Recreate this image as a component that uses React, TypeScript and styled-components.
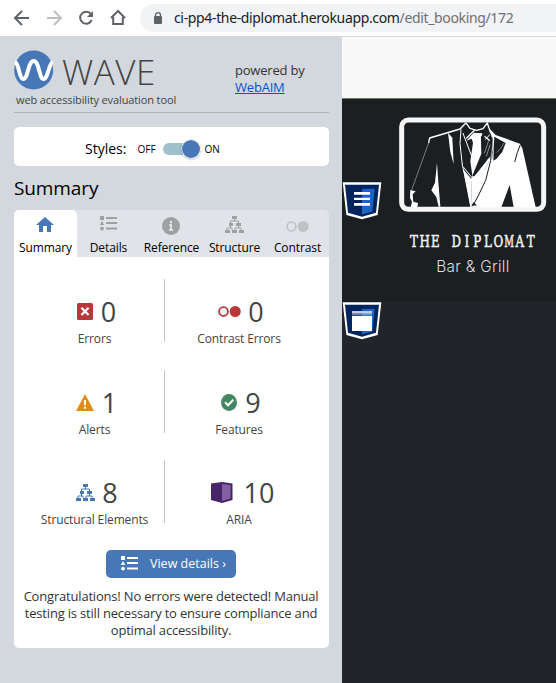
import React from 'react';
import styled, { createGlobalStyle } from 'styled-components';

const Global = createGlobalStyle`
  * { box-sizing: border-box; }
  body { margin: 0; overflow: hidden; font-family: "Open Sans", "Noto Sans", sans-serif; color: #000; }
  svg { display: block; flex: none; }
`;
const Window = styled.div`width: 556px; height: 683px; display: flex; flex-direction: column; overflow: hidden;`;
const Toolbar = styled.header`height: 36px; flex: none; display: flex; align-items: flex-start; background: #fff;`;
const NavIcons = styled.div`width: 140px; flex: none;`;
const AddressBar = styled.div`
  flex: 1; height: 28px; margin-top: 4px; padding-left: 13px; display: flex; align-items: center;
  background: #f1f3f4; border-radius: 14px 0 0 14px; color: #202124;
  font-size: 14px; line-height: 28px; white-space: nowrap;
`;
const Url = styled.span`margin-left: 11px; letter-spacing: -0.35px; font-family: "Noto Sans", sans-serif;`;
const Path = styled.span`color: #6d7175;`;
const Body = styled.div`flex: 1; display: flex; min-height: 0;`;
const Sidebar = styled.aside`width: 342px; flex: none; padding: 14px 13px 0 14px; background: #d3d8df;`;
const Brand = styled.div`height: 63px; display: flex; border-bottom: 1px solid #b0b5b8;`;
const BrandMain = styled.div`width: 221px;`;
const BrandRow = styled.div`display: flex; height: 43px;`;
const BrandName = styled.div`
  margin: -1px 0 0 8px; color: #444; font-size: 35px; font-weight: 300; line-height: 46px; letter-spacing: 0.5px;
`;
const Tagline = styled.div`margin: 0 0 0 2px; color: #444; font-size: 11px; line-height: 14px; letter-spacing: -0.12px; white-space: nowrap;`;
const Powered = styled.div`padding-top: 12px; color: #333; font-size: 13px; line-height: 17px; letter-spacing: -0.2px; white-space: nowrap;`;
const Link = styled.a`color: #0b50d0; text-decoration: underline;`;
const Styles = styled.div`
  height: 39px; margin-top: 14px; padding: 5px 0 0 71px; display: flex; background: #fff; border-radius: 5px;
  font-size: 14px; line-height: 34px;
`;
const Small = styled.span<{ $left: number }>`margin-left: ${p => p.$left}px; font-size: 10px; line-height: 35px;`;
const Track = styled.div`
  width: 37px; height: 12px; margin: 11px 0 0 7px; display: flex; align-items: center; justify-content: flex-end;
  background: #9fc1cb; border-radius: 6px;
`;
const Knob = styled.div`
  width: 18px; height: 18px; flex: none; border-radius: 50%; background: #4777b7;
  box-shadow: 0 0 0 .6px #fff, 0 1px 2px 1px #0003;
`;
const Title = styled.h2`margin: 0; height: 44px; font-size: 19px; font-weight: 400; line-height: 44px; letter-spacing: -0.1px;`;
const Tabs = styled.nav`height: 47px; display: flex; background: #e0e3e7; border-radius: 5px 5px 0 0;`;
const Tab = styled.div<{ $active?: boolean }>`
  width: 63px; display: flex; flex-direction: column; align-items: center; white-space: nowrap;
  font-size: 12px; line-height: 18px; letter-spacing: -0.1px; border-radius: 5px 5px 0 0; background: ${p => p.$active ? '#fff' : 'transparent'};
`;
const TabIcon = styled.div`height: 29px; display: flex; align-items: flex-start; padding: 6px 1px 0 0;`;
const Panel = styled.main`height: 391px; background: #fff; border-radius: 0 0 5px 5px; padding-top: 22px;`;
const StatRow = styled.div`height: 90.5px; display: grid; grid-template-columns: 151px 164px;`;
const Stat = styled.div<{ $divided?: boolean }>`
  height: 63px; color: #444; text-align: center;
  padding: ${p => p.$divided ? '15px 0 0 11px' : '15px 16px 0 0'};
  border-right: ${p => p.$divided ? '1px solid #c6c6c6' : '0'};
`;
const Count = styled.div<{ $gap: number; $indent: number }>`
  height: 36px; padding: 0 0 1px ${p => p.$indent}px; display: flex; align-items: center; justify-content: center;
  gap: ${p => p.$gap}px; font-size: 27px; line-height: 35px;
`;
const StatLabel = styled.div`font-size: 12px; line-height: 18px; letter-spacing: -0.13px; white-space: nowrap;`;
const Details = styled.button`
  width: 130px; height: 28px; margin: -1px 0 0 92px; padding: 0 0 0 15px; border: 0; border-radius: 5px;
  display: flex; align-items: center; gap: 12px; background: #4777b7; color: #fff; font: 12.5px "Open Sans", sans-serif; white-space: nowrap;
`;
const Message = styled.p`margin: 10px 0 0; padding-right: 1px; color: #333; text-align: center; font-size: 13px; line-height: 17px; letter-spacing: -0.19px; white-space: nowrap;`;
const Site = styled.section`
  position: relative; flex: 1; display: flex; flex-direction: column; background: #212529; border-top: 1px solid #d4d6d8;
`;
const Blank = styled.div`height: 61px; background: #f9f9f9;`;
const Hero = styled.div`height: 204px; background: #1b1f21; border-top: 1px solid #69806b; padding: 11px 0 0 53px;`;
const Marker = styled.div<{ $top: number }>`position: absolute; left: 0; top: ${p => p.$top}px;`;

const ListIcon = ({ color }: { color: string }) => (
  <svg width="17" height="15" viewBox="0 0 17 15" fill={color}>
    <path d="M0 0h4v4H0zM2 5l2.3 4H-.3zM6 1h11v2H6zM6 6h11v2H6zM6 11.5h11v2H6z" /><circle cx="2" cy="12.6" r="1.9" />
  </svg>
);
const TreeIcon = ({ color }: { color: string }) => (
  <svg width="19" height="17" viewBox="0 0 19 17" fill={color}>
    <path d="M7 0h5v3H7zM4 7h4v3H4zM11 7h5v3h-5zM0 14h5v3H0zM7 14h5v3H7zM14 14h5v3h-5z" />
    <path d="M9.5 3v2.5M5.5 7V5h8v2M5.5 10v2M13.5 10v2M2 14v-2h5v2M10 14v-2h6v2" fill="none" stroke={color} />
  </svg>
);
const Circles = ({ color, large }: { color: string; large?: boolean }) => (
  <svg width="23" height={large ? 15 : 21} viewBox={large ? '0 0 23 15' : '0 -3 23 21'} fill={color}>
    <circle cx="5.5" cy="7.5" r="4.4" fill="none" stroke={color} strokeWidth={large ? 1.8 : 1.5} /><circle cx="17.2" cy="7.5" r="5.5" />
  </svg>
);
const ErrorIcon = () => <svg width="16" height="17" viewBox="0 0 16 17"><rect width="16" height="17" rx="1.5" fill="#b93639" /><path d="m4.4 4.8 7.2 7.2m0-7.2L4.4 12" stroke="#fff" strokeWidth="2.3" /></svg>;
const AlertIcon = () => <svg width="18" height="17" viewBox="0 0 18 17"><path d="m9 0 9 17H0z" fill="#e18b1a" /><path d="M9 6v5m0 1.5v2.2" stroke="#fff" strokeWidth="2" /></svg>;
const CheckIcon = () => <svg width="16" height="17" viewBox="0 0 16 17"><ellipse cx="8" cy="8.5" rx="8" ry="8.4" fill="#468763" /><path d="m4 8.3 3 3 5.4-5.6" fill="none" stroke="#fff" strokeWidth="2" /></svg>;
const AriaIcon = () => <svg width="22" height="21" viewBox="0 0 22 21"><path d="M0 1.5 11 0l10.5 1.5V18L11 21 0 18z" fill="#482469" /><path d="m11 2 8.5 1v13.6L11 19z" fill="#8360a1" /></svg>;

const Shield = ({ page }: { page?: boolean }) => (
  <svg width="40" height="38" viewBox="0 0 120 114">
    <path d="M2 1h116l-11 98-47 13-47-13z" fill="#fff" /><path d="M9 8h102l-9 84-42 12-42-12z" fill="#00245b" />
    <path d="M60 20h38l-7 69-31 8z" fill="#1c63c8" />
    {page
      ? <><path d="M30 42h60v45H30z" fill="#fff" /><path d="M30 27h60v8H30z" fill="#bdcce2" /><path d="M30 37h60v3H30z" fill="#8fa8d0" /></>
      : <path d="M36 30h48v8H36zM36 47h48v7H36zM36 63h48v8H36z" fill="#fff" />}
  </svg>
);

const Diplomat = () => (
  <svg width="160" height="175" viewBox="0 0 480 525">
    <rect x="20" y="30" width="426" height="268" rx="20" fill="#1b1f21" stroke="#f5f5f5" strokeWidth="15" />
    <g fill="#fff">
      <path d="m282 54 20 21 73 26 7 14 40 177h-66l-12-67-25 67h-87l-4-86 40-51 25-65z" />
      <path d="m159 68 13 15 4 80-10-37zM126 158l3 45 7 87h-5l-7-29-15-20 11-23z" />
      <path d="m46 240 16 4-9 9 2 22 14 4-2 13H47l4-17-6-12z" />
      <path d="m236 68 26 2-4 18 4 43-14 44-15 28-7-49 8-56-4-12-16 6z" />
      <path d="m204 176 25 31 2 83h-5l-12-60z" />
    </g>
    <g fill="#1b1f21">
      <path d="m258 78 12 7 21 7-4 46-49 61-6-2 27-66z" />
      <path d="m298 80 34 19-10 26-18 22-9 5z" />
    </g>
    <g fill="none" stroke="#fff" strokeLinecap="round" strokeLinejoin="round">
      <path d="m212 40-17 17-91 27-3 14" strokeWidth="4" />
      <path d="M101 98 50 240" stroke="#aaa" strokeWidth="2" />
      <path d="m198 59-3 42 7 64 15 65 11 60M204 70l31 82M206 172l25 31" strokeWidth="3" />
      <path d="m214 40 11 15 20 6 19-5 13-17 9 28M239 60l-24 24M270 80l13 11" strokeWidth="4" />
      <path d="m272 88 12-14m-10 100 14-18m-22 22 14-31" strokeWidth="3" />
    </g>
    <g fill="none" stroke="#1b1f21" strokeWidth="3">
      <path d="m290 90-3 62-15 59-24 50-15 27M376 104q-10 23-17 52" />
      <path d="m281 92-13 38m17-26-11 35m-5 41 14-27" stroke="#c0c3c4" strokeWidth="2" />
      <path d="M292 82q5 35-2 65m37-48q-7 16-22 29" stroke="#7b7f82" />
    </g>
    <path d="m229 287 17-1-10-9z" fill="#1b1f21" />
    <g fill="#f4f4f4" stroke="#f4f4f4" strokeWidth="1.6" fontFamily="DejaVu Serif" fontSize="51" textAnchor="middle">
      <text y="411" transform="scale(.7 1)" x="81 127 173">THE</text>
      <text y="411" transform="scale(.7 1)" x="263 308 353 398 443">DIPLO</text>
      <text y="411" transform="scale(.56 1)" x="611">M</text>
      <text y="411" transform="scale(.7 1)" x="535 582">AT</text>
    </g>
    <text x="124" y="486" fontSize="46" fontFamily="Inter" fontWeight="300" fill="#ddd" textLength="219">Bar &amp; Grill</text>
  </svg>
);

const stats = [
  [{ icon: <ErrorIcon />, n: 0, label: 'Errors', gap: 8, indent: 4 }, { icon: <Circles color="#b93639" large />, n: 0, label: 'Contrast Errors', gap: 7, indent: 4 }],
  [{ icon: <AlertIcon />, n: 1, label: 'Alerts', gap: 8, indent: 4 }, { icon: <CheckIcon />, n: 9, label: 'Features', gap: 8, indent: 4 }],
  [{ icon: <TreeIcon color="#4777b7" />, n: 8, label: 'Structural Elements', gap: 7, indent: 5 }, { icon: <AriaIcon />, n: 10, label: 'ARIA', gap: 11, indent: 7 }],
];

export default function App() {
  return (
    <Window>
      <Global />
      <Toolbar>
        <NavIcons>
          <svg width="140" height="36" fill="none" stroke="#5f6368" strokeWidth="2">
            <path d="M29 18H16m6-7-7 7 7 7" /><path d="M47 18h13m-6-7 7 7-7 7" stroke="#bcbec1" />
            <path d="M91 14.2A6 6 0 1 0 91.7 20" /><path d="M93 11v6h-6z" fill="#5f6368" stroke="none" />
            <path d="m111 18 7-7 7 7M113.2 17v7h9.6v-7" />
          </svg>
        </NavIcons>
        <AddressBar>
          <svg width="10" height="13" viewBox="0 0 10 13"><rect x="1" y="4" width="8" height="8" rx="1" fill="#5f6368" /><path d="M2.5 5V3.2a2.5 2.5 0 0 1 5 0V5" fill="none" stroke="#5f6368" strokeWidth="1.3" /></svg>
          <Url>ci-pp4-the-diplomat.herokuapp.com<Path>/edit_booking/172</Path></Url>
        </AddressBar>
      </Toolbar>
      <Body>
        <Sidebar>
          <Brand>
            <BrandMain>
              <BrandRow>
                <svg width="40" height="40" viewBox="0 0 40 40">
                  <circle cx="19.7" cy="20" r="19.5" fill="#4777b7" />
                  <path d="M1 12c4 1 4 17 8.5 17S14 11 19.7 11 25 29 29.5 29 35 13 38.7 12" fill="none" stroke="#fff" strokeWidth="4" />
                </svg>
                <BrandName>WAVE</BrandName>
              </BrandRow>
              <Tagline>web accessibility evaluation tool</Tagline>
            </BrandMain>
            <Powered>powered by<br /><Link>WebAIM</Link></Powered>
          </Brand>
          <Styles>Styles:<Small $left={11}>OFF</Small><Track><Knob /></Track><Small $left={5}>ON</Small></Styles>
          <Title>Summary</Title>
          <Tabs>
            <Tab $active><TabIcon><svg width="18" height="17" viewBox="0 0 18 17"><path d="m9 1 9 8h-3v7h-4v-6H7v6H3V9H0z" fill="#4777b7" /></svg></TabIcon>Summary</Tab>
            <Tab><TabIcon><ListIcon color="#9da1a2" /></TabIcon>Details</Tab>
            <Tab><TabIcon><svg width="18" height="20" viewBox="0 0 18 20"><circle cx="9" cy="10" r="9" fill="#9da1a2" /><path d="M9 5v2.4M7.3 9H9v5m-2 0h4" fill="none" stroke="#e0e3e7" strokeWidth="2" /></svg></TabIcon>Reference</Tab>
            <Tab><TabIcon><TreeIcon color="#9da1a2" /></TabIcon>Structure</Tab>
            <Tab><TabIcon><Circles color="#bec2c4" /></TabIcon>Contrast</Tab>
          </Tabs>
          <Panel>
            {stats.map((row, r) => (
              <StatRow key={r}>
                {row.map((s, i) => (
                  <Stat key={s.label} $divided={i === 0}>
                    <Count $gap={s.gap} $indent={s.indent}>{s.icon}{s.n}</Count><StatLabel>{s.label}</StatLabel>
                  </Stat>
                ))}
              </StatRow>
            ))}
            <Details><ListIcon color="#fff" />View details ›</Details>
            <Message>Congratulations! No errors were detected! Manual<br />testing is still necessary to ensure compliance and<br />optimal accessibility.</Message>
          </Panel>
        </Sidebar>
        <Site>
          <Blank />
          <Hero><Diplomat /></Hero>
          <Marker $top={145}><Shield /></Marker>
          <Marker $top={265}><Shield page /></Marker>
        </Site>
      </Body>
    </Window>
  );
}
